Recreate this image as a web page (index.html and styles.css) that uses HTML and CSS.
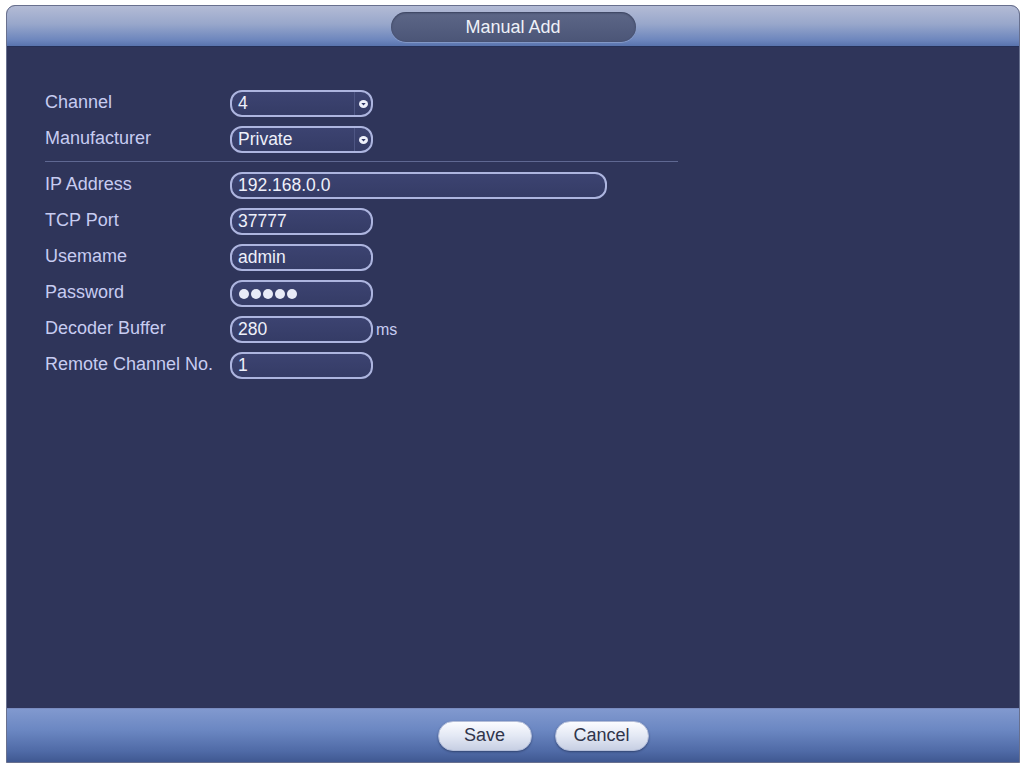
FILE: index.html
```html
<!DOCTYPE html>
<html lang="en">
<head>
    <meta charset="UTF-8">
    <title>Manual Add</title>
    <link rel="stylesheet" href="styles.css">
</head>
<body>
    <div class="window">
        <div class="titlebar">
            <div class="title">Manual Add</div>
        </div>
        <div class="content">
            <div class="row">
                <span class="label">Channel</span>
                <div class="field select">
                    <span class="value">4</span>
                    <span class="arrow">
                        <svg width="9" height="8" viewBox="0 0 9 8"><ellipse cx="4.5" cy="4" rx="4.5" ry="4" fill="#eef0fa"/><path d="M2.3 3 L6.7 3 L4.5 5.6 Z" fill="#2f3766"/></svg>
                    </span>
                </div>
            </div>
            <div class="row">
                <span class="label">Manufacturer</span>
                <div class="field select">
                    <span class="value">Private</span>
                    <span class="arrow">
                        <svg width="9" height="8" viewBox="0 0 9 8"><ellipse cx="4.5" cy="4" rx="4.5" ry="4" fill="#eef0fa"/><path d="M2.3 3 L6.7 3 L4.5 5.6 Z" fill="#2f3766"/></svg>
                    </span>
                </div>
            </div>
            <hr class="divider">
            <div class="row">
                <span class="label">IP Address</span>
                <div class="field wide"><span class="value">192.168.0.0</span></div>
            </div>
            <div class="row">
                <span class="label">TCP Port</span>
                <div class="field"><span class="value">37777</span></div>
            </div>
            <div class="row">
                <span class="label">Usemame</span>
                <div class="field"><span class="value">admin</span></div>
            </div>
            <div class="row">
                <span class="label">Password</span>
                <div class="field">
                    <span class="dots"><i></i><i></i><i></i><i></i><i></i></span>
                </div>
            </div>
            <div class="row">
                <span class="label">Decoder Buffer</span>
                <div class="field"><span class="value">280</span></div>
                <span class="unit">ms</span>
            </div>
            <div class="row">
                <span class="label">Remote Channel No.</span>
                <div class="field"><span class="value">1</span></div>
            </div>
        </div>
        <div class="footer">
            <button class="btn">Save</button>
            <button class="btn">Cancel</button>
        </div>
    </div>
</body>
</html>
```

FILE: styles.css
```css
body {
    margin: 0;
    background: #fff;
    font-family: "Liberation Sans", Arial, sans-serif;
}
.window {
    margin: 5px 0 0 6px;
    width: 1012px;
    height: 756px;
    border: 1px solid #68708e;
    border-radius: 9px 9px 0 0;
    display: flex;
    flex-direction: column;
    overflow: hidden;
    background: #2f355a;
}
.titlebar {
    height: 40px;
    flex: none;
    background: linear-gradient(#b3bbd5, #98a7cb 45%, #6d86bd 85%, #5873ad);
    border-bottom: 1px solid #253058;
    display: flex;
    justify-content: center;
    align-items: center;
}
.title {
    width: 245px;
    height: 30px;
    margin-top: 2px;
    border-radius: 15px;
    background: linear-gradient(#5d6787, #4b5577);
    box-shadow: inset 0 1px 2px rgba(20, 25, 50, 0.5), 0 1px 0 rgba(200, 210, 235, 0.3);
    color: #eef1f8;
    font-size: 18px;
    text-align: center;
    line-height: 30px;
}
.content {
    flex: 1;
    padding: 43px 0 0 38px;
}
.row {
    display: flex;
    align-items: center;
    height: 27px;
    margin-bottom: 9px;
}
.label {
    width: 185px;
    margin-top: -3px;
    color: #c7ccf1;
    font-size: 18px;
}
.field {
    box-sizing: border-box;
    width: 143px;
    height: 27px;
    border: 2px solid #adb5df;
    border-radius: 12px;
    background: linear-gradient(#3c4371, #353c66);
    display: flex;
    align-items: center;
    padding-left: 6px;
}
.field.wide {
    width: 377px;
}
.value {
    flex: 1;
    color: #eef0fa;
    font-size: 17.5px;
}
/* masked password: round dots instead of characters */
.dots {
    display: flex;
    gap: 2px;
    padding-left: 1px;
}
.dots i {
    width: 10px;
    height: 10px;
    border-radius: 50%;
    background: #e8ebf7;
}
.select .arrow {
    width: 16px;
    height: 100%;
    border-left: 1px solid #4e5684;
    display: flex;
    align-items: center;
    justify-content: center;
}
.unit {
    margin-left: 3px;
    color: #c7ccf1;
    font-size: 16px;
}
.divider {
    width: 633px;
    margin: -1px 0 10px 0;
    border: none;
    border-top: 1px solid #5f6892;
}
.footer {
    height: 53px;
    flex: none;
    background: linear-gradient(#8199cf, #6b87c2 40%, #4f6aa6 80%, #3f5891);
    border-top: 1px solid #7a8cc0;
    display: flex;
    justify-content: center;
    align-items: center;
    gap: 23px;
    padding-left: 60px;
}
.btn {
    width: 94px;
    height: 30px;
    border: 1px solid #b3bdd8;
    border-radius: 15px;
    background: linear-gradient(#fbfcff, #e3e8f4 50%, #c7cfe3);
    box-shadow: 0 1px 2px rgba(20, 30, 60, 0.5);
    color: #30354b;
    font-family: "Liberation Sans", Arial, sans-serif;
    font-size: 18px;
    padding: 0;
}
```
